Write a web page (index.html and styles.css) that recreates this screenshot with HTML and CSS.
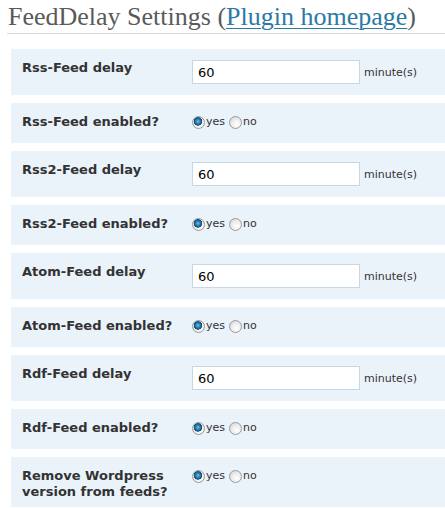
FILE: index.html
```html
<!DOCTYPE html>
<html>
<head>
<meta charset="utf-8">
<link rel="stylesheet" href="styles.css">
</head>
<body>
<div class="wrap">
  <h2 class="title">FeedDelay Settings (<a href="#">Plugin homepage</a>)</h2>
  <div class="form">
    <div class="row row-input">
      <div class="th">Rss-Feed delay</div>
      <div class="td"><input class="text" type="text" value="60"><span class="unit">minute(s)</span></div>
    </div>
    <div class="row row-radio">
      <div class="th">Rss-Feed enabled?</div>
      <div class="td"><label class="opt"><input type="radio" name="r1" checked>yes</label><label class="opt"><input type="radio" name="r1">no</label></div>
    </div>
    <div class="row row-input">
      <div class="th">Rss2-Feed delay</div>
      <div class="td"><input class="text" type="text" value="60"><span class="unit">minute(s)</span></div>
    </div>
    <div class="row row-radio">
      <div class="th">Rss2-Feed enabled?</div>
      <div class="td"><label class="opt"><input type="radio" name="r2" checked>yes</label><label class="opt"><input type="radio" name="r2">no</label></div>
    </div>
    <div class="row row-input">
      <div class="th">Atom-Feed delay</div>
      <div class="td"><input class="text" type="text" value="60"><span class="unit">minute(s)</span></div>
    </div>
    <div class="row row-radio">
      <div class="th">Atom-Feed enabled?</div>
      <div class="td"><label class="opt"><input type="radio" name="r3" checked>yes</label><label class="opt"><input type="radio" name="r3">no</label></div>
    </div>
    <div class="row row-input">
      <div class="th">Rdf-Feed delay</div>
      <div class="td"><input class="text" type="text" value="60"><span class="unit">minute(s)</span></div>
    </div>
    <div class="row row-radio">
      <div class="th">Rdf-Feed enabled?</div>
      <div class="td"><label class="opt"><input type="radio" name="r4" checked>yes</label><label class="opt"><input type="radio" name="r4">no</label></div>
    </div>
    <div class="row row-radio">
      <div class="th">Remove Wordpress version from feeds?</div>
      <div class="td"><label class="opt"><input type="radio" name="r5" checked>yes</label><label class="opt"><input type="radio" name="r5">no</label></div>
    </div>
  </div>
</div>
</body>
</html>
```
FILE: styles.css
```css
html, body {
  margin: 0;
  padding: 0;
  background: #fff;
  overflow: hidden;
}
.wrap {
  padding-left: 7px;
}
.title {
  margin: 0;
  padding: 0 0 0 1px;
  font-family: "Liberation Serif", serif;
  font-weight: normal;
  font-size: 26px;
  line-height: 30px;
  color: #5a5a5a;
  border-bottom: 1px solid #dadada;
  height: 34px;
  box-sizing: border-box;
  padding-top: 2px;
}
.title a {
  color: #2a7aa5;
  text-decoration: underline;
  text-decoration-thickness: 1px;
  text-underline-offset: 3px;
}
.form {
  margin: 15px 0 0 4px;
  display: flex;
  flex-direction: column;
  gap: 8px;
}
.row {
  display: flex;
  background: #eaf2fa;
  font-family: "DejaVu Sans", Verdana, sans-serif;
  color: #333;
}
.th {
  width: 160px;
  flex: none;
  padding: 11px 0 7px 11px;
  font-size: 13px;
  font-weight: bold;
  line-height: 16px;
  color: #333;
}
.td {
  flex: 1;
  padding: 11px 10px;
  display: flex;
  align-items: center;
  align-self: flex-start;
  font-size: 11px;
}
.row-input .td {
  height: 24px;
}
.row-radio .td {
  height: 16px;
  padding-top: 11px;
  padding-bottom: 13px;
}
.text {
  box-sizing: border-box;
  width: 168px;
  height: 24px;
  margin: 0;
  padding: 0 5px;
  border: 1px solid #c6d7e6;
  background: #fff;
  font-family: "DejaVu Sans", Verdana, sans-serif;
  font-size: 13px;
  color: #000;
  outline: none;
}
.unit {
  margin-left: 4px;
  font-size: 11px;
  color: #333;
}
.opt {
  display: inline-flex;
  align-items: center;
  margin-right: 4px;
  font-size: 11px;
  color: #333;
  line-height: 16px;
}
.opt input {
  -webkit-appearance: none;
  appearance: none;
  width: 13px;
  height: 13px;
  margin: 0 1px 0 0;
  border-radius: 50%;
  border: 1px solid #9b9b9b;
  background: radial-gradient(circle at 60% 65%, #ffffff 0%, #f0f0f0 40%, #cfcfcf 100%);
  box-sizing: border-box;
}
.opt input:checked {
  background:
    radial-gradient(circle at 45% 40%, #6fc3e8 0px, #2d86b8 2px, #124a73 4px, rgba(0,0,0,0) 4.5px),
    radial-gradient(circle at 60% 65%, #ffffff 0%, #f0f0f0 40%, #cfcfcf 100%);
}
```
